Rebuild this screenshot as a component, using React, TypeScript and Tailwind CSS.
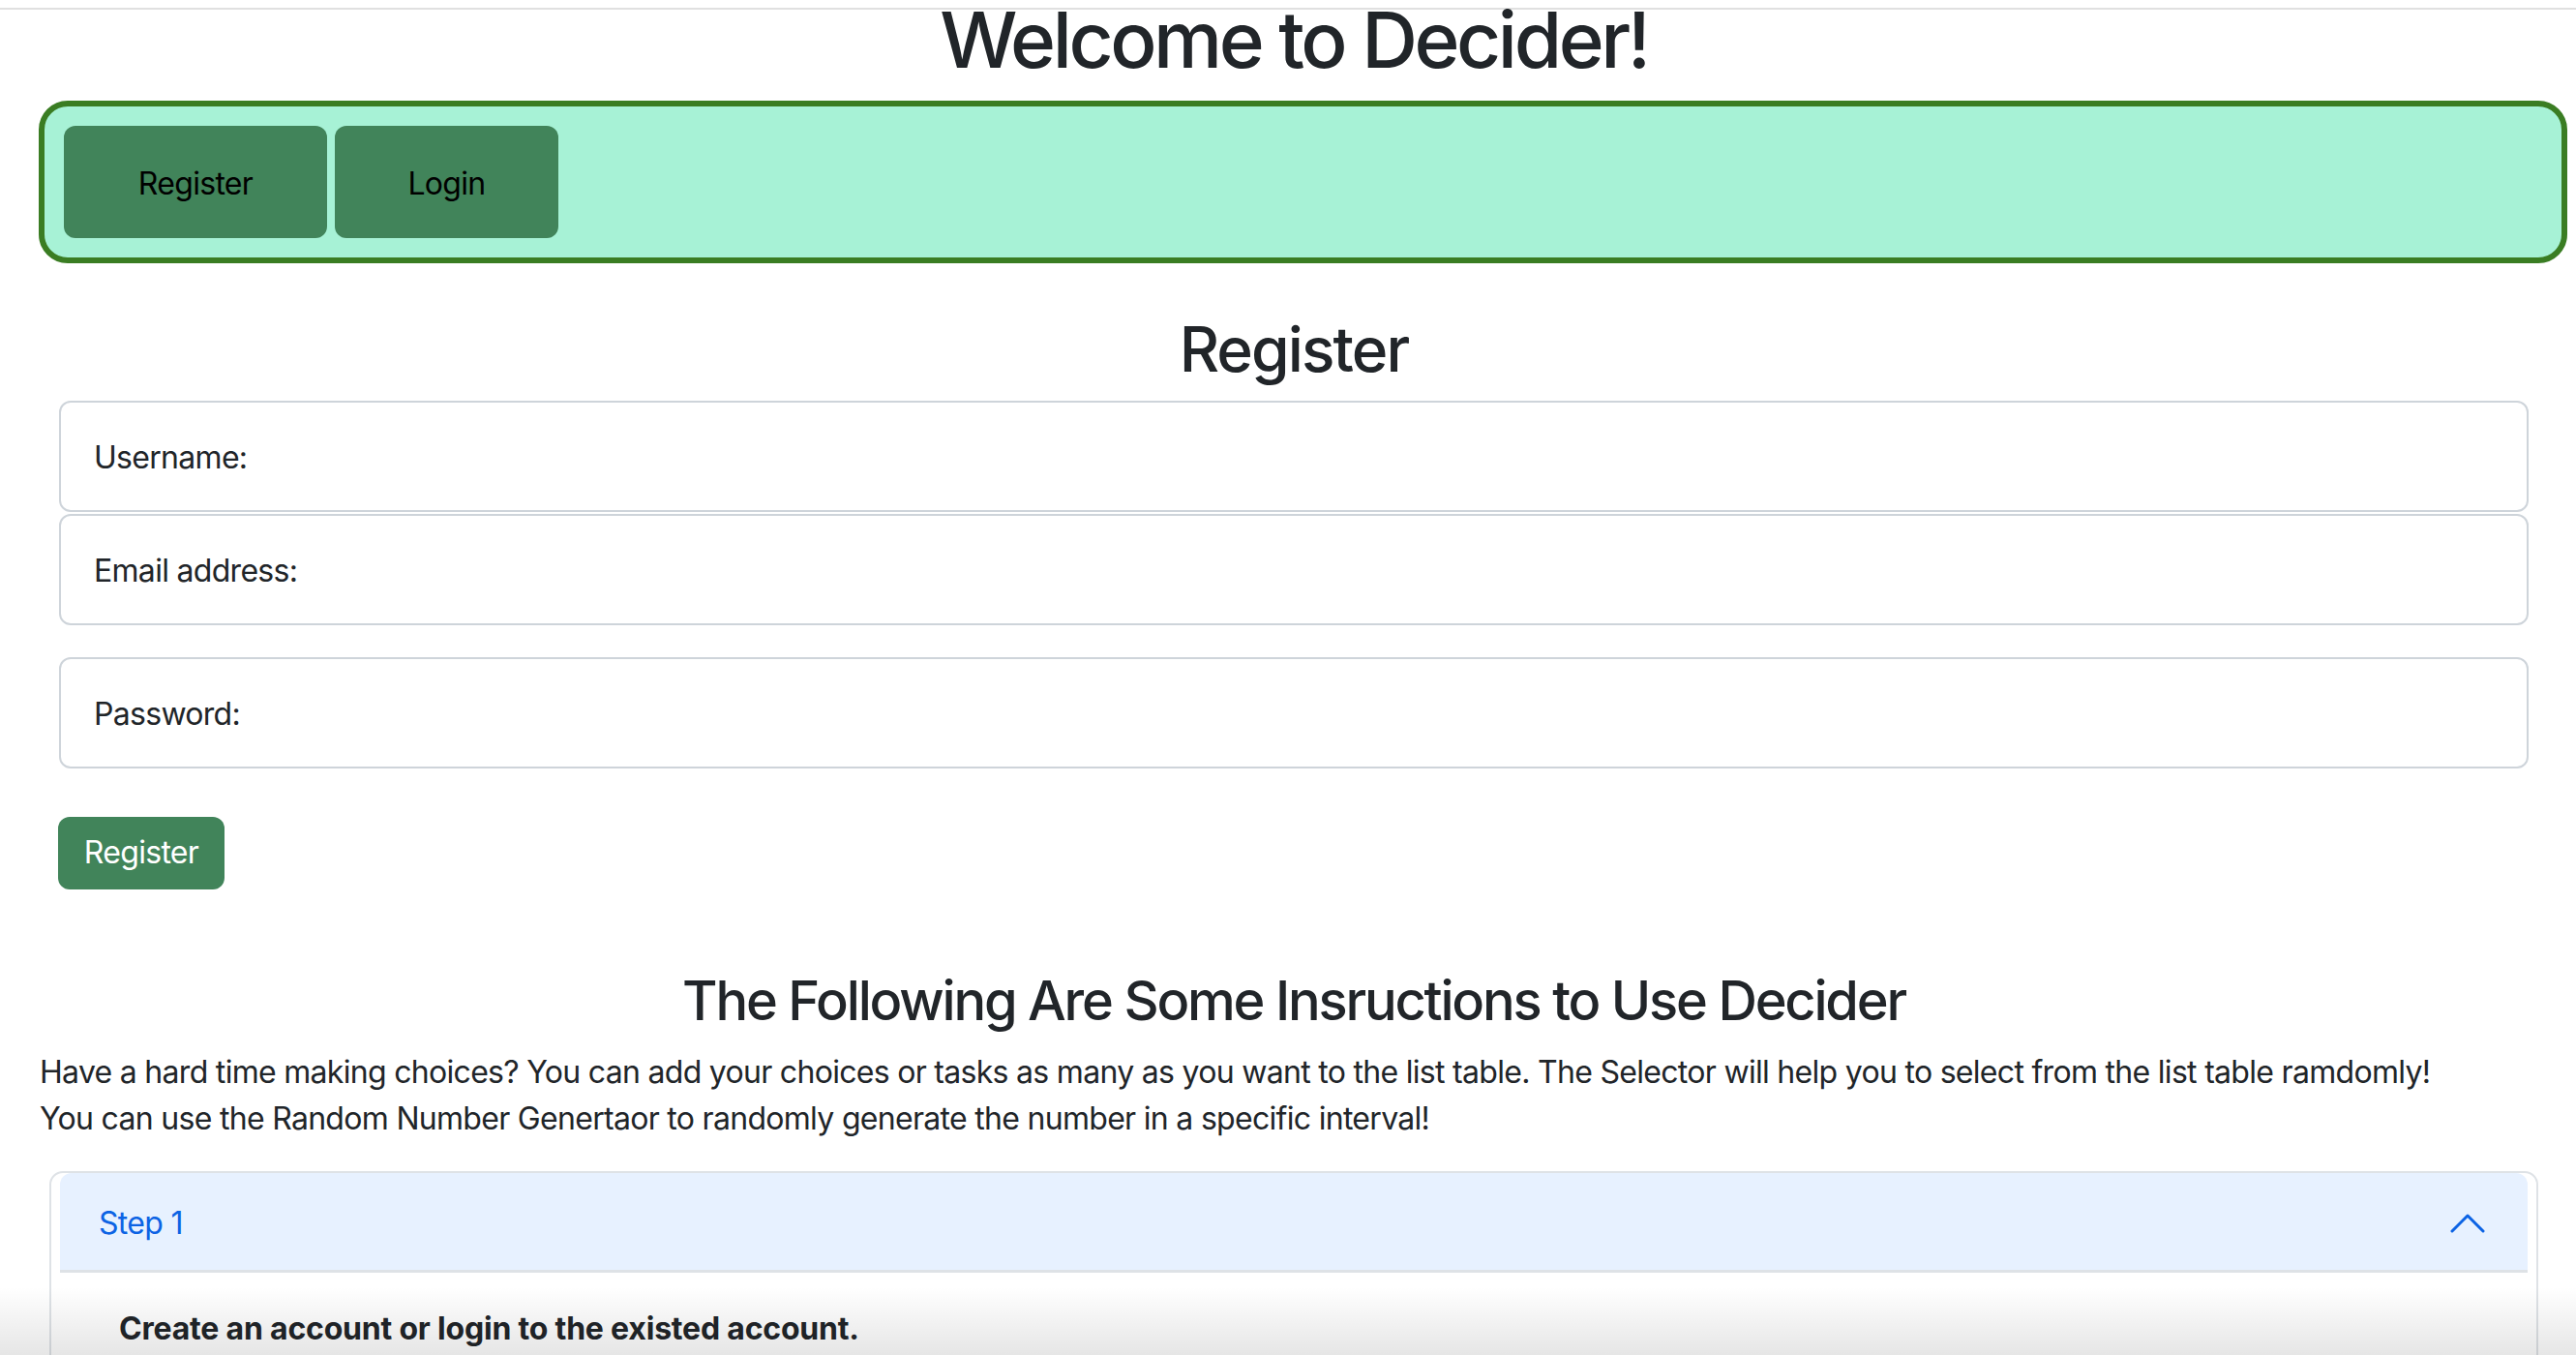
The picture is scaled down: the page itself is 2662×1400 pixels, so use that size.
import { useState } from 'react';

const FONT = { fontFamily: 'Inter, "Noto Sans", "Liberation Sans", sans-serif' };

const FIELDS = [
  { label: 'Username:', gap: 'mt-0' },
  { label: 'Email address:', gap: 'mt-[2px]' },
  { label: 'Password:', gap: 'mt-[33px]' },
];

function ChevronUp() {
  return (
    <svg width="36" height="20" viewBox="0 0 36 20" fill="none">
      <path d="M2 18L18 2L34 18" stroke="#0c63e4" strokeWidth="3" strokeLinecap="round" strokeLinejoin="round" />
    </svg>
  );
}

function NavBar() {
  return (
    <nav className="ml-[40px] mr-[9px] flex gap-2 rounded-[30px] border-[6px] border-[#3a7d23] bg-[#a7f2d6] p-[20px]">
      <button className="h-[116px] w-[272px] rounded-[12px] bg-[#41845a] pt-[4px] text-[32px] text-black">Register</button>
      <button className="h-[116px] w-[231px] rounded-[12px] bg-[#41845a] pt-[4px] text-[32px] text-black">Login</button>
    </nav>
  );
}

function RegisterForm() {
  return (
    <section className="pl-[61px] pr-[49px]">
      <h2 className="mt-[51px] mb-[14px] text-center text-[64px] font-medium leading-[1.2] tracking-[-1.9px]">Register</h2>
      {FIELDS.map((f) => (
        <div
          key={f.label}
          className={`${f.gap} flex h-[115px] items-center rounded-[12px] border-2 border-[#ced4da] pl-[34px] pt-[4px] text-[32px]`}
        >
          {f.label}
        </div>
      ))}
      <button className="-ml-px mt-[50px] h-[75px] w-[172px] rounded-[12px] bg-[#41845a] text-[32px] text-white">
        Register
      </button>
    </section>
  );
}

function Instructions() {
  const [open, setOpen] = useState(true);
  return (
    <section className="pl-[41px] pr-[29px]">
      <h3 className="mt-[82px] mb-4 text-center text-[56px] font-medium leading-[1.2] tracking-[-2.2px]">
        The Following Are Some Insructions to Use Decider
      </h3>
      <p className="text-[32px] leading-[48px]">
        Have a hard time making choices? You can add your choices or tasks as many as you want to the list table. The Selector will help you to select from the list table ramdomly!
        <br />
        You can use the Random Number Genertaor to randomly generate the number in a specific interval!
      </p>
      <div className="mx-[10px] mt-[30px] rounded-[14px] border-2 border-[#dee2e6] px-[9px]">
        <button
          onClick={() => setOpen(!open)}
          className="flex h-[103px] w-full items-center justify-between rounded-t-[12px] border-b-[3px] border-[#dee2e6] bg-[#e7f1ff] pl-[40px] pr-[44px] pt-[4px] text-[32px] text-[#0c63e4]"
        >
          Step 1
          <ChevronUp />
        </button>
        {open && (
          <div className="pl-[61px] pt-[34px] pb-[60px] text-[32px] font-bold leading-[48px] tracking-[-0.2px]">
            Create an account or login to the existed account.
          </div>
        )}
      </div>
    </section>
  );
}

export default function App() {
  return (
    <div className="relative h-[1400px] overflow-hidden bg-white text-[#212529] tracking-[-0.7px]" style={FONT}>
      <div className="h-2" />
      <div className="border-t-2 border-[#e0e0e0]">
        <h1 className="-mt-[9px] mb-[23px] pl-[12px] text-center text-[80px] font-medium leading-[80px] tracking-[-3.4px]">
          Welcome to Decider!
        </h1>
        <NavBar />
        <RegisterForm />
        <Instructions />
      </div>
      <div className="pointer-events-none absolute inset-x-0 bottom-0 h-[70px] bg-gradient-to-b from-transparent to-black/10" />
    </div>
  );
}
